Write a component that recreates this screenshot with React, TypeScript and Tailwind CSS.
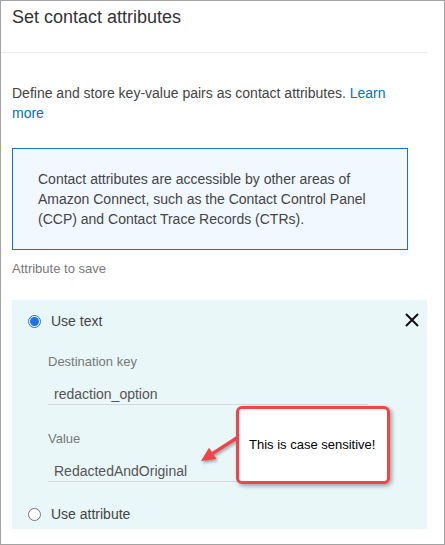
export default function App() {
  return (
    <div className="relative w-[445px] h-[545px] border border-[#a3a3a3] bg-white font-['Liberation_Sans',Arial,sans-serif] text-[#444]">
      <div className="h-[52px] mr-[16px] border-b border-[#eaeded] pl-[11px] pt-[5px]">
        <h1 className="text-[18px] leading-[22px] text-[#333]">Set contact attributes</h1>
      </div>

      <p className="mt-[30px] ml-[11px] w-[396px] text-[14px] leading-[20px] text-[#444]">
        Define and store key-value pairs as contact attributes.{' '}
        <a className="text-[#0073bb]">Learn more</a>
      </p>

      <div className="mt-[25px] ml-[11px] w-[396px] h-[102px] border border-[#1d6fc2] bg-[#f1f8ff] pl-[25px] pr-[34px] pt-[20px] text-[14px] leading-[20px] text-[#444]">
        Contact attributes are accessible by other areas of Amazon Connect, such as the Contact Control Panel (CCP) and Contact Trace Records (CTRs).
      </div>

      <div className="mt-[10px] ml-[11px] text-[13px] leading-[18px] text-[#777]">Attribute to save</div>

      <section className="mt-[22px] ml-[11px] w-[415px] bg-[#e9f7f8] pt-[11px] pb-[5px]">
        <div className="flex h-[20px] items-center pl-[16px] pr-[8px]">
          <Radio checked />
          <span className="ml-[10px] text-[14px] text-[#444]">Use text</span>
          <div className="flex-1" />
          <svg width="14" height="14" viewBox="0 0 14 14" className="mt-[-3px]">
            <path d="M1 1 13 13M13 1 1 13" stroke="#111" strokeWidth="2" />
          </svg>
        </div>

        <div className="ml-[36px] w-[320px]">
          <div className="mt-[22px] text-[13px] leading-[18px] text-[#777]">Destination key</div>
          <div className="mt-[13px] h-[21px] border-b border-[#d5dbdb] pl-[6px] text-[14px] leading-[20px] text-[#555]">
            redaction_option
          </div>
          <div className="mt-[25px] text-[13px] leading-[18px] text-[#777]">Value</div>
          <div className="mt-[13px] h-[21px] border-b border-[#d5dbdb] pl-[6px] text-[14px] leading-[20px] text-[#555]">
            RedactedAndOriginal
          </div>
        </div>

        <div className="mt-[22px] flex h-[20px] items-center pl-[16px]">
          <Radio />
          <span className="ml-[10px] text-[14px] text-[#444]">Use attribute</span>
        </div>
      </section>

      {/* annotation callout */}
      <svg
        width="50"
        height="36"
        viewBox="0 0 50 36"
        className="absolute left-[194px] top-[429px] drop-shadow-[1px_2px_1.5px_rgba(0,0,0,0.35)]"
      >
        <path d="M17.8 23.4 44 6.5" stroke="#f2434b" strokeWidth="3.5" />
        <polygon points="6,31 21.6,29 14,17.8" fill="#f2434b" />
      </svg>
      <div className="absolute left-[235px] top-[405px] flex h-[78px] w-[154px] items-center rounded-[6px] border-[3px] border-[#f2434b] bg-white pl-[10px] text-[13px] text-black shadow-[2px_2px_4px_rgba(0,0,0,0.35)]">
        This is case sensitive!
      </div>
    </div>
  );
}

function Radio({ checked }: { checked?: boolean }) {
  return checked ? (
    <span className="flex h-[13px] w-[13px] items-center justify-center rounded-full border border-[#1a73e8] bg-white">
      <span className="h-[9px] w-[9px] rounded-full bg-[#1a73e8]" />
    </span>
  ) : (
    <span className="h-[13px] w-[13px] rounded-full border border-[#767676] bg-white" />
  );
}
